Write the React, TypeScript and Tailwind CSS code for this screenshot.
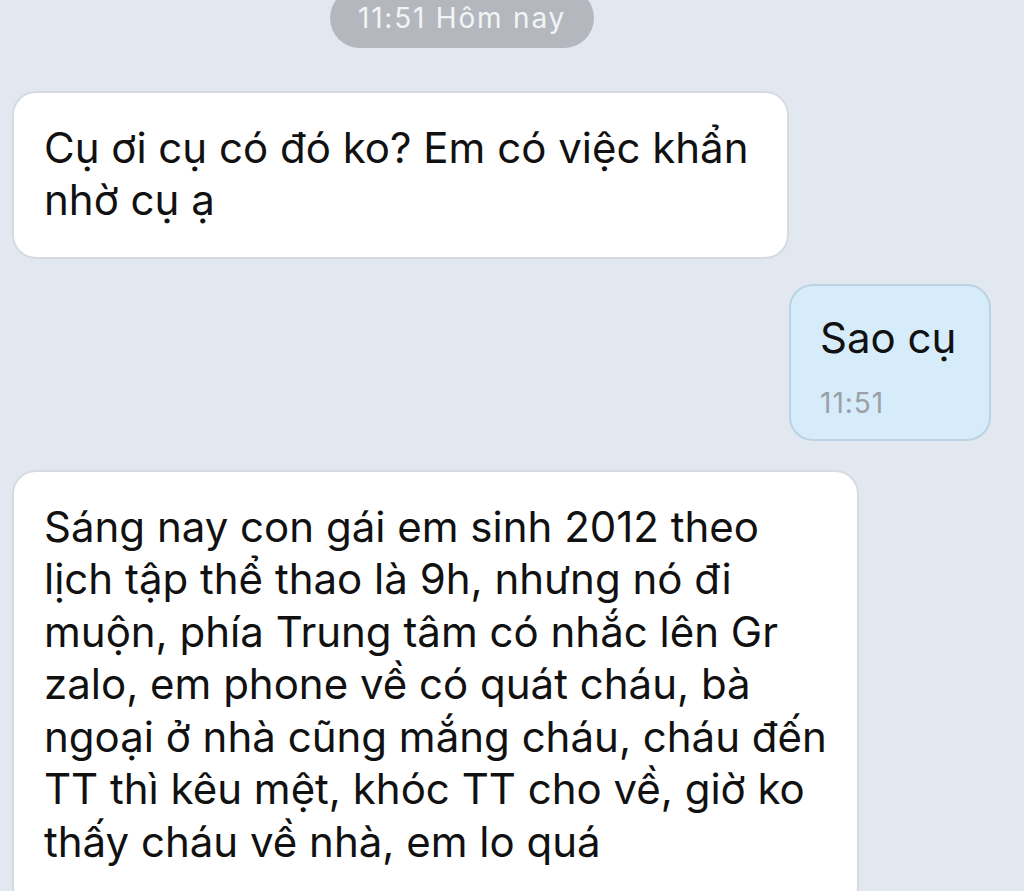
import React from 'react';

const font = { fontFamily: 'Inter, "Noto Sans", sans-serif' };

const firstMsg = ['Cụ ơi cụ có đó ko? Em có việc khẩn', 'nhờ cụ ạ'];
const longMsg = [
  'Sáng nay con gái em sinh 2012 theo',
  'lịch tập thể thao là 9h, nhưng nó đi',
  'muộn, phía Trung tâm có nhắc lên Gr',
  'zalo, em phone về có quát cháu, bà',
  'ngoại ở nhà cũng mắng cháu, cháu đến',
  'TT thì kêu mệt, khóc TT cho về, giờ ko',
  'thấy cháu về nhà, em lo quá',
];

const Lines = ({ lines }: { lines: string[] }) => (
  <div className="text-[42px] leading-[52.5px] text-[#111]">
    {lines.map(l => <div key={l} className="whitespace-nowrap">{l}</div>)}
  </div>
);

export default function App() {
  return (
    <div style={font} className="w-[1024px] h-[891px] overflow-hidden bg-[#e2e8f0] flex flex-col">
      <div className="-mt-3 shrink-0 ml-[330px] w-[264px] h-[60px] rounded-full bg-[#b4b8be] flex items-center justify-center text-[#f3f4f6] text-[28px] tracking-[1.8px]">
        11:51 Hôm nay
      </div>

      <div className="mt-[43px] shrink-0 ml-[12px] w-[777px] bg-white border-2 border-[#d6dbe1] rounded-[24px] pl-[30px] pt-[28.5px] pb-[30.5px]">
        <Lines lines={firstMsg} />
      </div>

      <div className="mt-[25px] shrink-0 self-end mr-[33px] w-[202px] h-[157px] bg-[#d6ecfa] border-2 border-[#bcd3e3] rounded-[24px] pl-[29px] pt-[25.5px]">
        <Lines lines={['Sao cụ']} />
        <div className="mt-[22px] text-[28px] leading-[34px] tracking-[1px] text-[#9aa0a6]">11:51</div>
      </div>

      <div className="mt-[29px] ml-[12px] w-[847px] shrink-0 bg-white border-2 border-[#d6dbe1] rounded-[24px] pl-[30px] pt-[28.5px] pb-[40px]">
        <Lines lines={longMsg} />
      </div>
    </div>
  );
}
